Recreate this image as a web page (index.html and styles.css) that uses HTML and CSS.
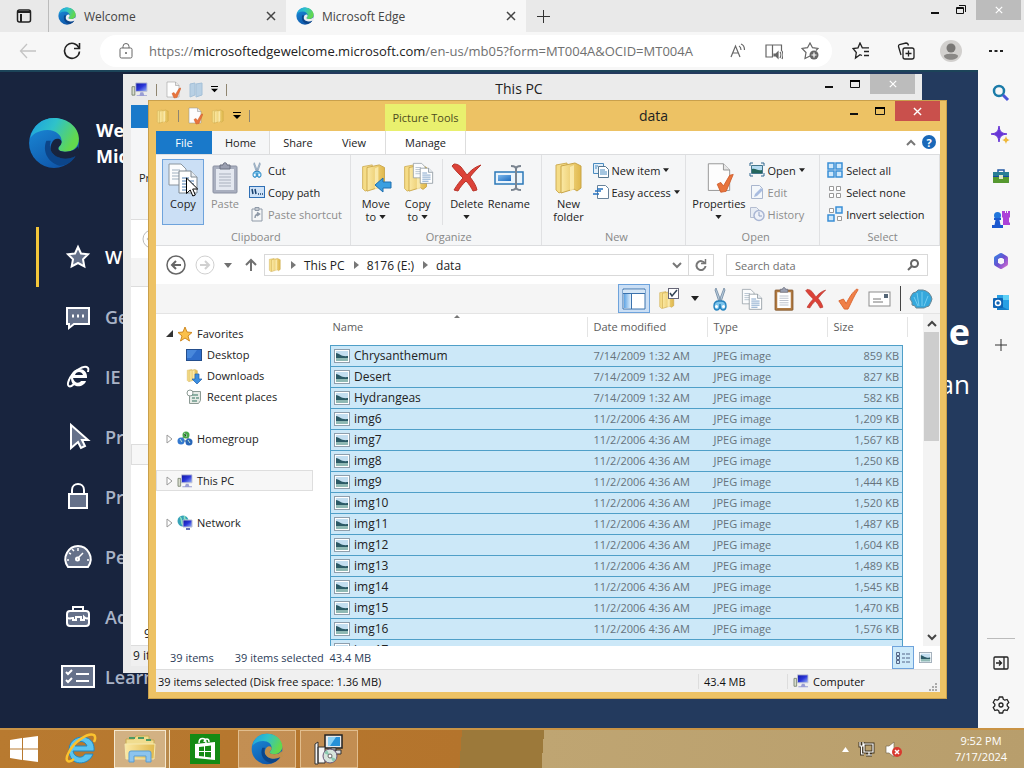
FILE: index.html
```html
<!DOCTYPE html>
<html lang="en">
<head>
  <meta charset="UTF-8" />
  <meta name="viewport" content="width=device-width, initial-scale=1.0" />
  <title>Microsoft Edge</title>
  <link rel="stylesheet" href="styles.css">
</head>
<body>
  <!-- shared icons -->
  <svg class="sprite" width="0" height="0" aria-hidden="true">
    <defs>
      <linearGradient id="g-edge-top" x1="0" y1="0" x2="1" y2="0.4">
        <stop offset="0" stop-color="#1b9de2" /><stop offset="0.5" stop-color="#2fc2c9" /><stop offset="1" stop-color="#62d84e" />
      </linearGradient>
      <linearGradient id="g-edge-low" x1="0" y1="0" x2="0.6" y2="1">
        <stop offset="0" stop-color="#1b8fdc" /><stop offset="1" stop-color="#0f55a8" />
      </linearGradient>
      <linearGradient id="g-folder" x1="0" y1="0" x2="1" y2="0">
        <stop offset="0" stop-color="#fbe9a4" /><stop offset="1" stop-color="#e0b84c" />
      </linearGradient>
      <linearGradient id="g-blue" x1="0" y1="0" x2="1" y2="1">
        <stop offset="0" stop-color="#7db8ec" /><stop offset="1" stop-color="#1c6cc0" />
      </linearGradient>
      <linearGradient id="g-pane" x1="0" y1="0" x2="1" y2="0">
        <stop offset="0" stop-color="#5fa4e4" /><stop offset="1" stop-color="#e4f1fc" />
      </linearGradient>
      <linearGradient id="g-screen" x1="0" y1="0" x2="1" y2="1">
        <stop offset="0" stop-color="#1018a0" /><stop offset="0.5" stop-color="#2a35d8" /><stop offset="1" stop-color="#9cb8f8" />
      </linearGradient>
      <linearGradient id="g-purple" x1="0" y1="0" x2="1" y2="1">
        <stop offset="0" stop-color="#3f7be0" /><stop offset="0.5" stop-color="#6a4fd0" /><stop offset="1" stop-color="#c86ad0" />
      </linearGradient>
    </defs>
    <symbol id="edge" viewBox="0 0 48 48">
      <circle cx="24" cy="24" r="23" fill="url(#g-edge-low)" />
      <path d="M2 20C4 8 13 1 24 1c13 0 23 9 23 19 0 8-6 12-12 12-4 0-7-1-7-3 0-1 3-3 3-7 0-5-5-10-13-10C9 12 3 17 2 20z" fill="url(#g-edge-top)" />
      <path d="M17 22c-4 9 1 20 12 23 7 0 12-4 15-9-9 5-20 2-23-5-1-3-1-6 0-9z" fill="#0c4589" />
      <path d="M28 29c0 2 3 3 7 3 5 0 9-2 11-5l2 9-4 0c-9 5-20 2-23-5-1-5 2-11 6-11 3 0 4 2 4 3 0 3-3 4-3 6z" class="edge-hole" />
    </symbol>
    <symbol id="folder" viewBox="0 0 32 32">
      <path d="M3 3l11-2v26l-8 4-3-3z" fill="#f5dc86" stroke="#cfae57" />
      <path d="M8 4l14-3 6 3v22l-4 3-3-2-13 4z" fill="url(#g-folder)" stroke="#c9a548" />
      <path d="M17 5l4-2v24l-4 3z" fill="#fff3c0" opacity="0.7" />
    </symbol>
    <symbol id="pc" viewBox="0 0 18 16">
      <path d="M1 5h3v9H1z" fill="#d7dccd" stroke="#7c8672" />
      <path d="M5 1h12v9H5z" fill="url(#g-screen)" stroke="#c0c4d4" />
      <path d="M10 11h3l1 3h3v1H6v-1h3z" fill="#9a9ed4" />
    </symbol>
    <symbol id="checkdoc" viewBox="0 0 32 36">
      <path d="M4 2h17l7 7v23H4z" fill="#fdfdfd" stroke="#8d8d8d" />
      <path d="M21 2v7h7" fill="#e6e6e6" stroke="#8d8d8d" />
      <path d="M14 25l4-2 3 4 7-12 4-1-8 19-6 1z" fill="#e8743c" stroke="#cf5c2c" />
    </symbol>
    <symbol id="docs" viewBox="0 0 32 32">
      <path d="M2 2h12l5 5v16H2z" fill="#fbfcfd" stroke="#8b959e" />
      <path d="M5 8h8M5 11h9M5 14h9M5 17h9" stroke="#9fb0c0" />
      <path d="M12 9h12l6 6v16H12z" fill="#fff" stroke="#7c8790" />
      <path d="M24 9v6h6" fill="#e8edf2" stroke="#7c8790" />
      <path d="M15 16h7M15 19h12M15 22h12M15 25h12M15 28h9" stroke="#4d7fb5" />
    </symbol>
    <symbol id="board" viewBox="0 0 32 32">
      <rect x="4" y="4" width="24" height="27" rx="1" class="board-back" />
      <rect x="7" y="7" width="18" height="21" class="board-page" />
      <path d="M11 3h3c0-3 4-3 4 0h3v4H11z" fill="#9a9fb0" stroke="#6b7080" />
      <path d="M10 12h12M10 15h12M10 18h12M10 21h12M10 24h12" stroke="#a9b0bd" />
    </symbol>
    <symbol id="scissors" viewBox="0 0 16 24">
      <path d="M4 1l5 13-2 1L3 3zM12 1L7 14l2 1 4-12z" fill="#b9cbdc" stroke="#6c87a0" stroke-width="0.8" />
      <path d="M7 14c-3 0-5 2-5 5s1 4 3 4c3 0 3-4 3-6 0 2 0 6 3 6 2 0 3-1 3-4s-2-5-5-5z" fill="#7cc4ec" stroke="#2481bd" stroke-width="1.4" />
      <circle cx="4.500" cy="19.500" r="1.500" fill="#fff" /><circle cx="11.500" cy="19.500" r="1.500" fill="#fff" />
    </symbol>
    <symbol id="cross" viewBox="0 0 32 32">
      <path d="M3 2c3 0 5 1 7 3l6 8c4-5 8-8 14-10-4 4-8 8-11 12 3 4 6 8 7 13l-4 1c-2-4-4-7-7-10-3 3-6 6-8 10L3 28c3-5 6-9 9-12C8 12 4 8 1 4z" fill="#dc4238" stroke="#b9362c" />
    </symbol>
    <symbol id="tick" viewBox="0 0 24 24">
      <path d="M2 14l5-2 3 5C13 11 17 4 22 1l1 1c-4 6-7 13-11 21H8z" fill="#f08048" stroke="#d9642e" />
    </symbol>
    <symbol id="picture" viewBox="0 0 16 14">
      <rect x="0.500" y="0.500" width="15" height="13" fill="#fff" stroke="#8e9eac" />
      <path d="M2 2h12v10H2z" fill="#c3def0" />
      <path d="M2 4c3 0 5 4 12 3v2H2z" fill="#2b5a66" />
      <path d="M2 9h12v3H2z" fill="#8fb9b4" />
    </symbol>
    <symbol id="caret" viewBox="0 0 8 5"><path d="M0 0h8L4 5z" fill="currentColor" /></symbol>
    <symbol id="chev" viewBox="0 0 10 8"><path d="M1 2l4 4 4-4" fill="none" stroke="currentColor" stroke-width="2" /></symbol>
    <symbol id="close" viewBox="0 0 10 10"><path d="M1 1l8 8M9 1L1 9" stroke="currentColor" stroke-width="1.500" /></symbol>
    <symbol id="tri" viewBox="0 0 7 10"><path d="M1 1l5 4-5 4z" fill="#fff" stroke="#9a9a9a" /></symbol>
    <symbol id="up-arrow" viewBox="0 0 14 14"><path d="M7 13V2M2 7l5-5 5 5" fill="none" stroke="currentColor" stroke-width="2" /></symbol>
  </svg>

  <div class="browser">
    <header class="tabs">
      <button class="tab-menu" aria-label="Tab actions">
        <svg width="16" height="16" viewBox="0 0 16 16" fill="none" stroke="#222" stroke-width="1.500"><rect x="1.500" y="2" width="13" height="12" rx="2" /><path d="M5 6v8M1.500 4h13" stroke-width="2" /></svg>
      </button>
      <div class="tab">
        <svg class="edge-light" width="18" height="18"><use href="#edge" /></svg>
        <span>Welcome</span>
        <button aria-label="Close tab"><svg width="10" height="10"><use href="#close" /></svg></button>
      </div>
      <div class="tab active">
        <svg class="edge-light" width="18" height="18"><use href="#edge" /></svg>
        <span>Microsoft Edge</span>
        <button aria-label="Close tab"><svg width="10" height="10"><use href="#close" /></svg></button>
      </div>
      <button class="new-tab" aria-label="New tab"><svg width="15" height="15" viewBox="0 0 15 15" stroke="#333"><path d="M7.500 1v13M1 7.500h13" /></svg></button>
      <div class="win-buttons main-buttons">
        <button aria-label="Minimize"><svg width="12" height="12" viewBox="0 0 12 12"><path d="M2 8h8v2H2z" fill="#111" /></svg></button>
        <button aria-label="Restore"><svg width="12" height="12" viewBox="0 0 12 12" fill="none" stroke="#111"><path d="M1.500 3.500h7v6h-7zM1 4.500h8" /><path d="M4 1.500h6.500V8" /></svg></button>
        <button class="close" aria-label="Close"><svg width="8" height="8"><use href="#close" /></svg></button>
      </div>
    </header>

    <div class="toolbar">
      <button class="faded" aria-label="Back"><svg width="18" height="16" viewBox="0 0 18 16" fill="none" stroke="#c4c4c4" stroke-width="1.300"><path d="M17 8H2M8 1L1.500 8 8 15" /></svg></button>
      <button aria-label="Refresh"><svg width="18" height="18" viewBox="0 0 18 18" fill="none" stroke="#222" stroke-width="1.600"><path d="M16 6A7.500 7.500 0 1 0 16.500 9.500" /><path d="M16.500 1v5.500H11" /></svg></button>
      <div class="address">
        <svg width="14" height="16" viewBox="0 0 14 16" fill="none" stroke="#666"><rect x="1" y="5" width="12" height="10" rx="1.500" /><path d="M4 5V3.500a3 3 0 0 1 6 0V5" /><circle cx="7" cy="10" r="0.600" fill="#666" /></svg>
        <a class="url" href="#">https://<b>microsoftedgewelcome.microsoft.com</b>/en-us/mb05?form=MT004A&amp;OCID=MT004A</a>
        <button aria-label="Read aloud"><svg width="18" height="18" viewBox="0 0 18 18" fill="none" stroke="#666" stroke-width="1.200"><path d="M2 15L6.500 4 11 15M3.500 11h6M10 4c2 1 2 3 2 4M12 2c3 1 3.500 4 3.500 6" /></svg></button>
        <button aria-label="Immersive reader"><svg width="18" height="18" viewBox="0 0 18 18" fill="none" stroke="#666" stroke-width="1.200"><path d="M8 15H1V3h6.500v12M8 3h8.500v6" /><path d="M9 12h2l2-2v6l-2-2H9z" fill="#666" /><path d="M15 10c1 1 1 4 0 6M17 9c1 2 1 6 0 8" /></svg></button>
        <button aria-label="Add to favorites"><svg width="18" height="18" viewBox="0 0 18 18" fill="none" stroke="#666" stroke-width="1.200"><path d="M9 14l-5 2.500 1-6L1 6.500l5.500-.8L9 1l2.500 4.700 5.500.8-2 2" /><circle cx="13" cy="13" r="4.500" fill="#666" stroke="none" /><path d="M13 10.500v5M10.500 13h5" stroke="#fff" /></svg></button>
      </div>
      <div class="tools">
        <button aria-label="Favorites"><svg width="18" height="18" viewBox="0 0 18 18" fill="none" stroke="#222" stroke-width="1.300"><path d="M10 13.500L8 12.700 3.500 16l.8-5.500L1 6.500l5-.7L8 1l2.300 4.800H17M12 9.500h5M12 13.500h5" /></svg></button>
        <button aria-label="Collections"><svg width="18" height="18" viewBox="0 0 18 18" fill="none" stroke="#222" stroke-width="1.300"><rect x="6" y="6" width="11" height="11" rx="2" /><path d="M11.500 8.500v6M8.500 11.500h6M4 13L1.500 4.500Q1.300 3 2.500 2.500L9 1q2 0 2.500 2.500" /></svg></button>
        <button aria-label="Profile"><svg width="22" height="22" viewBox="0 0 22 22"><circle cx="11" cy="11" r="11" fill="#d2d0ce" /><circle cx="11" cy="8" r="4.500" fill="#797775" /><path d="M4 16c0-3 14-3 14 0-1 5-13 5-14 0z" fill="#8a8886" /></svg></button>
        <button aria-label="More"><svg width="16" height="6" viewBox="0 0 16 6"><path d="M1 2h3v2H1zM6.500 2h3v2h-3zM12 2h3v2h-3z" fill="#222" /></svg></button>
      </div>
    </div>

    <div class="content">
      <main class="page">
        <aside class="menu">
          <div class="brand">
            <svg class="edge-dark" width="52" height="52"><use href="#edge" /></svg>
            <h1>We<br>Mic</h1>
          </div>
          <nav>
            <a class="current" href="#"><svg width="24" height="24" viewBox="0 0 24 24"><path d="M12 2l3 6.500 7 .8-5 5 1.300 7L12 18l-6.300 3.300 1.300-7-5-5 7-.8z" /></svg>W</a>
            <a href="#"><svg width="24" height="24" viewBox="0 0 24 24"><path d="M1 3h22v16H8l-5 4v-4H1z" /><path d="M6 11h2M11 11h2M16 11h2" stroke-width="3" /></svg>Ge</a>
            <a href="#"><svg width="24" height="24" viewBox="0 0 24 24"><path d="M7 13h14c1-12-16-12-16 0 0 11 13 10 15 3h-5c-2 3-7 2-8-3zM9 10c1-4 7-4 8 0z" fill="#fff" stroke="none" fill-rule="evenodd" /><path d="M8 19c-4 4-8 3-5-4C6 7 18-1 22 3c1 1 0 3 0 4" fill="none" /></svg>IE</a>
            <a href="#"><svg width="24" height="26" viewBox="0 0 24 26"><path d="M5 1l17 15h-6l3 6-4 2-3-6-7 6z" /></svg>Pr</a>
            <a href="#"><svg width="24" height="28" viewBox="0 0 24 28"><path d="M3 11h18v14H3z" /><path d="M6 11V7c0-8 12-8 12 0v4" fill="none" /></svg>Pr</a>
            <a href="#"><svg width="24" height="24" viewBox="2 0 24 24"><path d="M4 22C-3 12 5 1 14 1s17 11 10 21z" /><path d="M13 14l6-6M14 3v3M5 8l2 1M3 15h2M23 15h2M8 4l2 2" stroke-width="1.500" /><circle cx="13.500" cy="14" r="1.500" /></svg>Pe</a>
            <a href="#"><svg width="24" height="24" viewBox="0 0 24 24"><rect x="1" y="6" width="22" height="15" rx="3" /><path d="M7 6V2h10v4M1 13c3 1 6 0 6-1v3h3v-3h5v3h3v-3c1 1 3 2 5 1" fill="none" /></svg>Ad</a>
            <a class="wide" href="#"><svg width="34" height="24" viewBox="0 0 34 24"><rect x="1" y="1" width="32" height="21" /><path d="M5 7l2 2 4-4M5 15l2 2 4-4M15 9h13M15 16h13" /></svg>Learn</a>
          </nav>
        </aside>
        <section class="hero">
          <h2>e</h2>
          <p>an</p>
        </section>
      </main>

      <aside class="side">
        <button aria-label="Search"><svg width="18" height="18" viewBox="0 0 18 18" fill="none"><circle cx="7" cy="7" r="5" stroke="#1b7ba8" stroke-width="2.500" /><path d="M11 11l5 5" stroke="#4a54d8" stroke-width="3" /></svg></button>
        <button aria-label="Discover"><svg width="20" height="20" viewBox="0 0 20 20"><path d="M8 1c1 6 2 7 8 8-6 1-7 2-8 8-1-6-2-7-8-8 6-1 7-2 8-8z" fill="#6836d6" stroke="#6836d6" /><path d="M15 11c1 3 1 3 4 4-3 1-3 1-4 4-1-3-1-3-4-4 3-1 3-1 4-4z" fill="#eeb83a" /></svg></button>
        <button aria-label="Shopping"><svg width="18" height="16" viewBox="0 0 18 16"><path d="M6 3V1h6v2" fill="none" stroke="#235aa5" stroke-width="1.500" /><rect x="1" y="3" width="16" height="11" rx="1" fill="#174ba0" /><path d="M1 8h16v5q0 1-1 1H2q-1 0-1-1z" fill="#56992f" /><path d="M1 3h16v4H1z" fill="#287e94" /><path d="M7 6h4v4H7z" fill="#e0e7c8" /></svg></button>
        <button aria-label="Games"><svg width="18" height="20" viewBox="0 0 18 20"><path d="M11 2h2v2h1V2h1v2h1V2h2v6l-1 1v4l1 1v2h-7V9l-1-1V2z" fill="#ac42d8" /><circle cx="5.500" cy="6.500" r="3.500" fill="#2176dc" /><path d="M2 9h7v2H7.500l1 5H11v3H0v-3h2.500l1-5H2z" fill="#1b58cf" /></svg></button>
        <button aria-label="Microsoft 365"><svg width="18" height="18" viewBox="0 0 18 18" fill="none"><path d="M9 3l5 3v6l-5 3-5-3V6z" stroke="url(#g-purple)" stroke-width="4" stroke-linejoin="round" /></svg></button>
        <button aria-label="Outlook"><svg width="18" height="18" viewBox="0 0 18 18"><path d="M5 1h12v15H5z" fill="#28a0e4" /><path d="M11 1h6v5h-6z" fill="#5fd0f6" /><path d="M5 10l12 6H5z" fill="#147dc8" /><rect x="1" y="4" width="10" height="10" rx="1" fill="#0f64b4" /><circle cx="6" cy="9" r="2.500" fill="none" stroke="#fff" stroke-width="1.500" /></svg></button>
        <button aria-label="Customize"><svg width="14" height="14" viewBox="0 0 14 14" stroke="#333"><path d="M7 1v12M1 7h12" /></svg></button>
        <hr>
        <button aria-label="Hide sidebar"><svg width="16" height="14" viewBox="0 0 16 14" fill="none" stroke="#222" stroke-width="1.300"><rect x="1" y="1" width="14" height="12" rx="1" /><path d="M11 1v12M3 7h5M6 4.500L8.500 7 6 9.500" /></svg></button>
        <button aria-label="Settings"><svg width="18" height="18" viewBox="0 0 18 18" fill="none" stroke="#222" stroke-width="1.300"><path d="M7.300 1h3.400l.6 2.300 1.500.9 2.300-.7 1.700 3L15.200 8.100v1.800l1.600 1.600-1.700 3-2.300-.7-1.500.9-.6 2.300H7.300l-.6-2.300-1.500-.9-2.300.7-1.700-3 1.600-1.600V8.100L1.200 6.500l1.700-3 2.300.7 1.500-.9z" stroke-linejoin="round" /><circle cx="9" cy="9" r="2" /></svg></button>
      </aside>
    </div>
  </div>

  <!-- window behind -->
  <section class="window pc-window">
    <div class="titlebar">
      <div class="quick">
        <svg width="17" height="15"><use href="#pc" /></svg><i></i>
        <svg width="16" height="18"><use href="#checkdoc" /></svg>
        <svg class="pale" width="14" height="16" viewBox="0 0 14 16"><path d="M1 2l5-1v12l-5 2zM7 2l6-1v12l-6 2z" fill="#b8d0e4" stroke="#a4c0d8" /></svg>
        <svg width="7" height="7" viewBox="0 0 8 8"><path d="M0 0h8v1H0zM0 3h8L4 7z" /></svg><i></i>
      </div>
      <h2>This PC</h2>
      <div class="win-buttons">
        <button aria-label="Minimize"><svg width="12" height="12" viewBox="0 0 12 12"><path d="M2 8h8v2H2z" fill="#111" /></svg></button>
        <button aria-label="Maximize"><svg width="12" height="12" viewBox="0 0 12 12"><path d="M1.500 2.500h9v7h-9z" fill="none" stroke="#111" /><path d="M1 2h10v2H1z" /></svg></button>
        <button class="close" aria-label="Close"><svg width="8" height="8"><use href="#close" /></svg></button>
      </div>
    </div>
    <div class="window-body">
      <div class="back-tabs"><span></span></div>
      <div class="back-ribbon">Pr</div>
      <div class="back-nav"><svg width="20" height="20" viewBox="0 0 20 20" fill="none" stroke="#bbb"><circle cx="10" cy="10" r="9" /><path d="M14 10H6M9 7l-3 3 3 3" stroke-width="2" /></svg></div>
      <div class="back-bar"></div>
      <div class="back-main"><span class="back-row"></span><span class="back-count">9</span></div>
      <div class="back-status">9 it</div>
    </div>
  </section>

  <!-- active window -->
  <section class="window data-window">
    <div class="titlebar">
      <div class="quick">
        <svg width="14" height="15"><use href="#folder" /></svg><i></i>
        <svg width="16" height="18"><use href="#checkdoc" /></svg>
        <svg width="14" height="15"><use href="#folder" /></svg>
        <svg width="8" height="8" viewBox="0 0 8 8"><path d="M0 0h8v1H0zM0 3h8L4 7z" /></svg><i></i>
      </div>
      <span class="context">Picture Tools</span>
      <h2>data</h2>
      <div class="win-buttons">
        <button aria-label="Minimize"><svg width="12" height="12" viewBox="0 0 12 12"><path d="M2 8h8v2H2z" fill="#111" /></svg></button>
        <button aria-label="Maximize"><svg width="12" height="12" viewBox="0 0 12 12"><path d="M1.500 2.500h9v7h-9z" fill="none" stroke="#111" /><path d="M1 2h10v2H1z" /></svg></button>
        <button class="close red" aria-label="Close"><svg width="9" height="9"><use href="#close" /></svg></button>
      </div>
    </div>
    <div class="window-body">
      <nav class="ribbon-tabs">
        <button class="file">File</button>
        <button class="on">Home</button>
        <button>Share</button>
        <button>View</button>
        <button class="manage">Manage</button>
        <span class="spacer"></span>
        <button class="mini" aria-label="Collapse ribbon"><svg class="flip" width="10" height="8"><use href="#chev" /></svg></button>
        <button class="mini help" aria-label="Help">?</button>
      </nav>

      <div class="ribbon">
        <div class="group">
          <div class="tools-row">
            <button class="big picked"><svg width="32" height="32"><use href="#docs" /></svg>Copy</button>
            <button class="big dim"><svg class="board-gray" width="32" height="32"><use href="#board" /></svg>Paste</button>
            <div class="stack">
              <button><svg width="16" height="16"><use href="#scissors" /></svg>Cut</button>
              <button><svg width="16" height="12" viewBox="0 0 16 12"><rect x="0.500" y="0.500" width="15" height="11" fill="#cfe2f7" stroke="#2f6fb5" /><path d="M3 3l1 5M6 3l1 5M9 8h1M11 8h1M13 8h1" stroke="#18406e" stroke-width="1.500" /></svg>Copy path</button>
              <button class="dim"><svg width="16" height="15" viewBox="0 0 16 15" fill="none" stroke="#8f9aa8"><path d="M3 2h10v12H3zM6 0.500h4v3H6z" /><path d="M6 11c0-3 1-4 4-4M8 5.500L10.500 7 8 9" stroke-width="1.500" /></svg>Paste shortcut</button>
            </div>
          </div>
          <span class="group-name">Clipboard</span>
        </div>
        <div class="group">
          <div class="tools-row organize">
            <button class="big"><svg width="32" height="32" viewBox="0 0 32 32"><use href="#folder" width="28" height="32" /><path d="M31 20v6h-8v4l-8-7 8-7v4z" fill="#3a9fe0" stroke="#1f6fb0" /></svg>Move<span>to <svg width="7" height="4"><use href="#caret" /></svg></span></button>
            <button class="big"><svg width="32" height="32" viewBox="0 0 32 32"><use href="#folder" width="28" height="32" /><use href="#docs" x="10" width="22" height="22" /></svg>Copy<span>to <svg width="7" height="4"><use href="#caret" /></svg></span></button>
            <i class="line"></i>
            <button class="big"><svg width="32" height="32"><use href="#cross" /></svg>Delete<span><svg width="7" height="4"><use href="#caret" /></svg></span></button>
            <button class="big"><svg width="32" height="32" viewBox="0 0 32 32"><rect x="2" y="10" width="28" height="12" fill="#eaf4fc" stroke="#2b78b8" stroke-width="1.500" /><path d="M5 13h13v6H5z" fill="url(#g-blue)" /><path d="M18 4c3 0 5 1 5 3v18c0 2-2 3-5 3M28 4c-3 0-5 1-5 3v18c0 2 2 3 5 3" fill="none" stroke="#7a8490" stroke-width="2" /></svg>Rename</button>
          </div>
          <span class="group-name">Organize</span>
        </div>
        <div class="group">
          <div class="tools-row">
            <button class="big"><svg width="32" height="32"><use href="#folder" /></svg>New<span>folder</span></button>
            <div class="stack">
              <button><svg width="16" height="16" viewBox="0 0 16 16"><path d="M0.500 1.500h10v10h-10z" fill="#e4f0fa" stroke="#4b8cc0" /><path d="M5.500 4.500h7l3 3v8h-10z" fill="#fff" stroke="#55768f" /><path d="M7 8h5M7 10h7M7 12h7M2 4h3M2 6h2" stroke="#4b8cc0" /></svg>New item <svg width="6" height="4"><use href="#caret" /></svg></button>
              <button><svg width="16" height="16" viewBox="0 0 16 16"><path d="M4.500 1.500h8l3 3v10h-11z" fill="#fff" stroke="#68829a" /><path d="M0 10h6M2 7h6M4 5h6" stroke="#2471c0" stroke-width="1.500" /></svg>Easy access <svg width="6" height="4"><use href="#caret" /></svg></button>
            </div>
          </div>
          <span class="group-name">New</span>
        </div>
        <div class="group">
          <div class="tools-row">
            <button class="big"><svg width="32" height="32"><use href="#checkdoc" /></svg>Properties<span><svg width="7" height="4"><use href="#caret" /></svg></span></button>
            <div class="stack">
              <button><svg width="16" height="16" viewBox="0 0 16 16"><path d="M2.500 3.500h11v8h-11z" fill="#b5dcf2" stroke="#44768c" /><path d="M3 7c4-1 5 2 10 1v3H3z" fill="#24665c" /><path d="M1 4V1h3M12 1h3v3M1 11v3h3M15 11v3h-3" fill="none" stroke="#2d6690" /></svg>Open <svg width="6" height="4"><use href="#caret" /></svg></button>
              <button class="dim"><svg width="16" height="16" viewBox="0 0 16 16"><path d="M2.500 1.500h8l3 3v10h-11z" fill="#f3f7fb" stroke="#a9b6ce" /><path d="M5 13l1-3 6-6 2 2-6 6z" fill="#a8bce0" /></svg>Edit</button>
              <button class="dim"><svg width="16" height="16" viewBox="0 0 16 16"><path d="M1.500 1.500h6l3 3v7h-9z" fill="#e7ecf4" stroke="#b4bdd0" /><circle cx="10" cy="9.500" r="5" fill="#eef1f8" stroke="#a9b6d4" stroke-width="1.500" /><path d="M10 6v4h3" fill="none" stroke="#8fa0c4" /></svg>History</button>
            </div>
          </div>
          <span class="group-name">Open</span>
        </div>
        <div class="group">
          <div class="tools-row select">
            <div class="stack">
              <button><svg width="16" height="16" viewBox="0 0 16 16" fill="#cfe8fb" stroke="#3a8fd6" stroke-width="1.500"><path d="M1 1h6v6H1zM9 1h6v6H9zM1 9h6v6H1zM9 9h6v6H9z" /></svg>Select all</button>
              <button><svg width="16" height="16" viewBox="0 0 16 16" fill="#fff" stroke="#999"><path d="M2.500 2.500h4v4h-4zM9.500 2.500h4v4h-4zM2.500 9.500h4v4h-4zM9.500 9.500h4v4h-4z" /></svg>Select none</button>
              <button><svg width="16" height="16" viewBox="0 0 16 16" fill="#cfe8fb" stroke="#3a8fd6" stroke-width="1.500"><path d="M9 1h6v6H9zM1 9h6v6H1z" /><path d="M2.500 2.500h4v4h-4zM10.500 10.500h4v4h-4z" fill="#fff" stroke="#999" stroke-width="1" /></svg>Invert selection</button>
            </div>
          </div>
          <span class="group-name">Select</span>
        </div>
      </div>

      <div class="nav-row">
        <button aria-label="Back"><svg width="20" height="20" viewBox="0 0 20 20" fill="none" stroke="#666"><circle cx="10" cy="10" r="9" stroke-width="1.500" /><path d="M15 10H6M10 6l-4 4 4 4" stroke-width="2" /></svg></button>
        <button aria-label="Forward"><svg width="20" height="20" viewBox="0 0 20 20" fill="none" stroke="#d0d0d0"><circle cx="10" cy="10" r="9" /><path d="M5 10h9M10 6l4 4-4 4" stroke-width="2" /></svg></button>
        <button class="gray" aria-label="Recent"><svg width="8" height="5"><use href="#caret" /></svg></button>
        <button class="gray up" aria-label="Up"><svg width="14" height="14"><use href="#up-arrow" /></svg></button>
        <div class="path">
          <svg width="14" height="16"><use href="#folder" /></svg>
          <svg class="sep" width="5" height="8" viewBox="0 0 5 8"><path d="M0 0l5 4-5 4z" fill="#777" /></svg><a href="#">This PC</a>
          <svg class="sep" width="5" height="8" viewBox="0 0 5 8"><path d="M0 0l5 4-5 4z" fill="#777" /></svg><a href="#">8176 (E:)</a>
          <svg class="sep" width="5" height="8" viewBox="0 0 5 8"><path d="M0 0l5 4-5 4z" fill="#777" /></svg><a href="#">data</a>
          <button class="drop" aria-label="Previous locations"><svg width="10" height="8"><use href="#chev" /></svg></button>
          <button class="reload" aria-label="Refresh"><svg width="12" height="12" viewBox="0 0 12 12" fill="none" stroke="#777" stroke-width="2"><path d="M10 4.500A4.500 4.500 0 1 0 10.500 7" /><path d="M10.500 0v4.500H6" stroke-width="1.500" /></svg></button>
        </div>
        <label class="search">
          <input type="text" placeholder="Search data" aria-label="Search data">
          <svg width="12" height="12" viewBox="0 0 12 12" fill="none" stroke="#666" stroke-width="2"><circle cx="7.500" cy="4.500" r="3.500" /><path d="M5 7l-4 4" /></svg>
        </label>
      </div>

      <div class="classic">
        <button class="picked pane" aria-label="Navigation pane"><svg width="24" height="22" viewBox="0 0 24 22"><path d="M1 1h22v20H1z" fill="#fff" stroke="#3b72ad" /><path d="M1 2h22v3H1z" fill="#d5e6f6" /><path d="M2 6h7v14H2z" fill="url(#g-pane)" /><path d="M1 5.500h22M9.500 5v16" stroke="#3b72ad" /></svg></button>
        <button aria-label="Folder options"><svg width="24" height="24" viewBox="0 0 24 24"><use href="#folder" y="3" width="18" height="20" /><rect x="10.500" y="1.500" width="10" height="10" fill="#fff" stroke="#667" /><path d="M12 6l2 3 5-6" fill="none" stroke="#345" stroke-width="1.500" /></svg></button>
        <button class="thin" aria-label="More options"><svg width="8" height="5"><use href="#caret" /></svg></button>
        <button aria-label="Cut"><svg width="20" height="24"><use href="#scissors" /></svg></button>
        <button aria-label="Copy"><svg width="22" height="24"><use href="#docs" /></svg></button>
        <button aria-label="Paste"><svg class="board-brown" width="24" height="26"><use href="#board" /></svg></button>
        <button aria-label="Delete"><svg width="22" height="22"><use href="#cross" /></svg></button>
        <button aria-label="Properties"><svg width="22" height="22"><use href="#tick" /></svg></button>
        <button aria-label="Email"><svg width="24" height="16" viewBox="0 0 24 16"><rect x="1" y="1" width="21" height="14" fill="#fff" stroke="#8d8d8d" /><path d="M16 3h4v4h-4z" fill="#567" /><path d="M5 8h8M5 11h10" stroke="#777" /></svg></button>
        <i></i>
        <button aria-label="Settings"><svg width="24" height="22" viewBox="0 0 24 22"><path d="M7 20l-1-2-3-1 0-3-2-3 1-3 2-3 3-1 2-2h5l3 1 3 2 2 3 1 3-1 3-2 4-3 1-2 1z" fill="#35a8dc" stroke="#6c8794" /><path d="M9 18L5 9M10 18L8 5M13 18V4M15 18l4-10" stroke="#74cdf0" /></svg></button>
      </div>

      <div class="explorer">
        <nav class="tree">
          <a href="#"><svg class="arrow" width="7" height="7" viewBox="0 0 7 7"><path d="M7 0v7H0z" fill="#333" /></svg><svg width="16" height="16" viewBox="0 0 16 16"><path d="M8 1l2 5 5 .5-4 3.500 1.500 5L8 12l-4.500 3L5 10 1 6.500 6 6z" fill="#fbc04a" stroke="#d08a22" /></svg>Favorites</a>
          <a class="sub" href="#"><svg width="16" height="12" viewBox="0 0 16 12"><rect x="0.500" y="0.500" width="15" height="11" fill="#2f6ecb" stroke="#244e8c" /><path d="M1 1h10L5 9H1z" fill="#5a9ae6" opacity="0.600" /></svg>Desktop</a>
          <a class="sub" href="#"><svg width="16" height="16" viewBox="0 0 16 16"><use href="#folder" width="13" height="15" /><path d="M9 6h4v5h3l-5 5-5-5h3z" fill="#3b8ee0" stroke="#1f62ac" stroke-width="0.700" /></svg>Downloads</a>
          <a class="sub" href="#"><svg width="16" height="16" viewBox="0 0 16 16"><path d="M3.500 2.500h11v9l-2 3h-9z" fill="#e6ebe6" stroke="#8c9a94" /><circle cx="4" cy="4" r="3" fill="#fff" stroke="#8c9a94" /><path d="M6 6h6M6 9h3M10 9h3M6 12h5" stroke="#6d9b8c" stroke-width="1.500" /></svg>Recent places</a>
          <a class="top" href="#"><svg class="arrow" width="7" height="10"><use href="#tri" /></svg><svg width="16" height="16" viewBox="0 0 16 16"><path d="M4 9l5-5 4 7z" fill="none" stroke="#96a8b8" stroke-width="2" /><circle cx="9" cy="4" r="3.500" fill="#48a848" /><circle cx="4" cy="10" r="3.500" fill="#3479d0" /><circle cx="12" cy="11" r="3.500" fill="#2866b8" /><path d="M7 2c2 1 3 2 2 4M3 8l2 3M11 9l2 3" stroke="#b8e0d0" /></svg>Homegroup</a>
          <a class="top here" href="#"><svg class="arrow" width="7" height="10"><use href="#tri" /></svg><svg width="16" height="14"><use href="#pc" /></svg>This PC</a>
          <a class="top" href="#"><svg class="arrow" width="7" height="10"><use href="#tri" /></svg><svg width="16" height="16" viewBox="0 0 16 16"><circle cx="6" cy="6" r="5.500" fill="#36a3b8" /><path d="M3 2c3 2 0 5 3 8M8 1c-2 3 2 5 3 4" fill="none" stroke="#8de0c0" stroke-width="1.500" /><path d="M6 5h9v7H6z" fill="url(#g-screen)" stroke="#b7bdd2" /><path d="M9 13h4v2H9z" fill="#6670b8" /></svg>Network</a>
        </nav>
        <div class="files">
          <table>
            <thead>
              <tr><th class="name">Name<svg width="6" height="3" viewBox="0 0 6 3"><path d="M0 3h6L3 0z" fill="#777" /></svg></th><th class="date">Date modified</th><th class="type">Type</th><th class="size">Size</th></tr>
            </thead>
            <tbody id="rows"></tbody>
          </table>
        </div>
        <div class="scrollbar">
          <svg class="flip" width="10" height="8"><use href="#chev" /></svg>
          <span></span>
          <svg width="10" height="8"><use href="#chev" /></svg>
        </div>
      </div>

      <div class="summary">
        <span>39 items</span><span>39 items selected&nbsp; 43.4 MB</span>
        <button class="picked" aria-label="Details view"><svg width="14" height="12" viewBox="0 0 14 12" fill="none" stroke="#568"><path d="M0.500 0.500h3v3h-3zM0.500 4.500h3v3h-3zM0.500 8.500h3v3h-3zM6 2h3M10 2h4M6 6h3M10 6h4M6 10h3M10 10h4" /></svg></button>
        <button aria-label="Large icons view"><svg width="13" height="11"><use href="#picture" /></svg></button>
      </div>
      <footer class="status">
        <span class="free">39 items selected (Disk free space: 1.36 MB)</span>
        <span class="total">43.4 MB</span>
        <span class="zone"><svg width="16" height="14"><use href="#pc" /></svg>Computer</span>
        <svg class="grip" width="9" height="9" viewBox="0 0 9 9" fill="#aaa"><path d="M6 0h2v2H6zM3 3h2v2H3zM6 3h2v2H6zM0 6h2v2H0zM3 6h2v2H3zM6 6h2v2H6z" /></svg>
      </footer>
    </div>
  </section>

  <svg class="pointer" width="12" height="20" viewBox="0 0 12 20"><path d="M0.500 1v15.500l3.700-3.500 2.600 6 2.500-1-2.600-6h5z" fill="#fff" stroke="#000" /></svg>

  <footer class="taskbar">
    <button class="start" aria-label="Start"><svg width="28" height="26" viewBox="0 0 28 26" fill="#fff"><path d="M0 4l12-2v10.500H0zM13 2l15-2v12.500H13zM0 13.500h12V24L0 22zM13 13.500h15V26l-15-2z" /></svg></button>
    <button class="ie" aria-label="Internet Explorer"><svg width="32" height="32" viewBox="0 0 32 32"><path d="M8 18h21C31-1 4 0 4 17c0 17 20 16 24 4h-8c-2 5-11 4-12-3zM10 13c2-6 10-6 12 0z" fill="#5cc4f0" stroke="#2088c4" fill-rule="evenodd" /><path d="M9 26C3 31-1 28 4 19 9 9 23-1 29 2c2 2 1 5 0 7" fill="none" stroke="#fbc22e" stroke-width="2.500" /></svg></button>
    <button class="open stacked" aria-label="File Explorer"><svg width="32" height="30" viewBox="0 0 32 30"><path d="M2 5h8l2-3h13v4h5v18H2z" fill="#f0dc8e" stroke="#c6a850" /><path d="M5 4h6M14 4h6M22 6h5" stroke="#4b9a62" stroke-width="2" /><path d="M1 10h30l-1 15H2z" fill="url(#g-folder)" stroke="#f6eab0" /><path d="M5 28v-9q0-2 2-2h18q2 0 2 2v9h-5v-6H10v6z" fill="#8cc4ee" stroke="#5a9dd0" /></svg></button>
    <button class="store" aria-label="Store"><svg width="30" height="30" viewBox="0 0 30 30"><path d="M0 0h30v30H0z" fill="#148a14" /><path d="M5 10l20-2v18L5 24z" fill="#fff" /><path d="M9 9c0-6 7-6 7 0M14 8c1-4 5-4 5 0" fill="none" stroke="#fff" stroke-width="1.500" /><path d="M9 13l5-.6V17H9zM15 12.300l6-.8V17h-6zM9 18h5v4.500L9 22zM15 18h6v5.500l-6-.8z" fill="#148a14" /></svg></button>
    <button class="open" aria-label="Microsoft Edge"><svg class="edge-task" width="32" height="32"><use href="#edge" /></svg></button>
    <button class="open" aria-label="Setup"><svg width="32" height="32" viewBox="0 0 32 32"><path d="M12 2h17v13H12z" fill="#e8e8e8" stroke="#222" stroke-width="1.500" /><path d="M15 4h12v9H15z" fill="#2791d8" /><path d="M15 4h8l-6 9h-2z" fill="#8bd0f4" /><path d="M18 15h5v3h-5zM14 17h14v4H14z" fill="#ddd" stroke="#333" /><path d="M2 11l3-2v22H2zM5 14h7v16H5z" fill="#f4f4f4" stroke="#333" /><circle cx="17" cy="23" r="7" fill="#d6e4dc" stroke="#657" /><path d="M17 23l-6-3 3-3zM17 23l6 3-3 3z" fill="#8bc8b0" /><circle cx="17" cy="23" r="2" fill="#fff" stroke="#666" /></svg></button>
    <div class="tray">
      <svg width="7" height="5" viewBox="0 0 7 5"><path d="M0 5h7L3.500 0z" fill="#fff" /></svg>
      <svg width="18" height="16" viewBox="0 0 18 16" fill="none" stroke="#3d3220" stroke-width="3"><path d="M6 3h9v8H6zM8 14h6M11 11v3M2 1v4h3V1M3.500 5v8H6" /><path d="M6 3h9v8H6zM8 14h6M11 11v3M2 1v4h3V1M3.500 5v8H6" stroke="#fff" stroke-width="1.200" /></svg>
      <svg width="18" height="17" viewBox="0 0 18 17"><path d="M1 5h3l5-4v15l-5-4H1z" fill="#fff" stroke="#7a6a50" stroke-width="0.700" /><circle cx="12" cy="11" r="5" fill="#d8392f" /><path d="M10 9l4 4M14 9l-4 4" stroke="#fff" stroke-width="1.500" /></svg>
      <div class="clock">9:52 PM<br>7/17/2024</div>
    </div>
  </footer>

  <script src="script.js"></script>
</body>
</html>
```
FILE: styles.css
```css
* {
  box-sizing: border-box;
}
body {
  margin: 0;
  height: 100vh;
  display: flex;
  flex-direction: column;
  overflow: hidden;
  position: relative;
  font-family: "Open Sans", "Noto Sans", sans-serif;
  font-size: 12px;
  color: #222;
}
button {
  font: inherit;
  color: inherit;
  background: none;
  border: 0;
  padding: 0;
  display: flex;
  align-items: center;
  justify-content: center;
}
a {
  color: inherit;
  text-decoration: none;
}
h1, h2, p {
  margin: 0;
}
svg {
  flex: none;
}
.sprite {
  position: absolute;
}
.flip {
  transform: rotate(180deg);
}
.edge-light { --hole: #eee; }
.edge-dark { --hole: #18243e; }
.edge-task { --hole: #c08f4c; }
.edge-hole {
  fill: var(--hole);
}
.board-back {
  fill: var(--board);
  stroke: var(--board-line);
}
.board-page {
  fill: var(--sheet);
}
.board-gray { --board: #a9afbf; --board-line: #8b91a3; --sheet: #e4e8f0; }
.board-brown { --board: #b07a42; --board-line: #7e5127; --sheet: #fff; }

/* browser */
.browser {
  flex: 1;
  min-height: 0;
  display: flex;
  flex-direction: column;
}
.tabs {
  height: 32px;
  display: flex;
  background: #e9e9e9;
  color: #444;
}
.tab-menu {
  width: 48px;
}
.tab {
  width: 238px;
  display: flex;
  align-items: center;
  gap: 8px;
  padding: 0 10px 0 9px;
  border-left: 1px solid #bbb;
}
.tab span {
  flex: 1;
}
.tab.active {
  background: #f7f7f7;
  width: 240px;
  border-color: #f7f7f7;
}
.new-tab {
  width: 35px;
}
.win-buttons {
  display: flex;
  margin-left: auto;
  align-items: flex-start;
}
.win-buttons button {
  width: 26px;
  height: 20px;
}
.win-buttons .close {
  width: 45px;
  margin-left: 2px;
  background: #bcbcbc;
  color: #fff;
}
.win-buttons .red {
  background: #c9504c;
}
.main-buttons {
  padding-right: 3px;
}
.toolbar {
  height: 38px;
  display: flex;
  align-items: center;
  background: #f7f7f7;
  padding: 0 6px;
}
.toolbar > button {
  width: 44px;
}
.address {
  flex: 1;
  min-width: 0;
  height: 32px;
  margin-left: 6px;
  padding: 0 13px 0 19px;
  display: flex;
  align-items: center;
  gap: 18px;
  background: #fff;
  border-radius: 16px;
}
.url {
  flex: 1;
  min-width: 0;
  margin-left: -2px;
  white-space: nowrap;
  color: #707070;
  font-size: 13px;
}
.url b {
  font-weight: 400;
  color: #222;
}
.tools {
  display: flex;
  width: 186px;
  padding-left: 6px;
}
.tools button {
  flex: 1;
}
.content {
  flex: 1;
  min-height: 0;
  display: flex;
}
.page {
  flex: 1;
  display: flex;
  border-top: 2px solid #1c4459;
  background: #233a5e;
}
.menu {
  width: 320px;
  background: #18243e;
  color: #a9b3c6;
  font-size: 18px;
  font-weight: 600;
}
.brand {
  display: flex;
  align-items: center;
  gap: 16px;
  padding: 45px 0 0 28px;
  color: #fff;
}
.brand h1 {
  font-size: 18px;
  line-height: 26px;
}
.menu nav {
  padding: 58px 0 0 36px;
}
.menu nav a {
  display: flex;
  align-items: center;
  gap: 15px;
  height: 60px;
  padding-left: 27px;
  border-left: 3px solid transparent;
}
.menu nav .current {
  border-color: #f3c63a;
  color: #fff;
}
.menu nav svg {
  width: 24px;
  overflow: visible;
  fill: #65718a;
  stroke: #fff;
  stroke-width: 2;
}
.menu nav .wide {
  gap: 10px;
  padding-left: 22px;
}
.menu nav .wide svg {
  width: 34px;
}
.hero {
  flex: 1;
  padding: 236px 8px 0 0;
  text-align: right;
  color: #fff;
}
.hero h2 {
  font-size: 36px;
  line-height: 48px;
}
.hero p {
  padding-top: 8px;
  font-size: 26px;
  line-height: 40px;
}
.side {
  width: 46px;
  display: flex;
  flex-direction: column;
  padding: 2px 0;
  background: #f7f7f7;
}
.side button {
  height: 42px;
}
.side hr {
  width: 28px;
  margin: auto auto 3px;
  border: 0;
  border-top: 1px solid #bbb;
}

/* windows */
.window {
  position: absolute;
  display: flex;
  flex-direction: column;
  width: 799px;
  height: 599px;
  padding: 0 7px 7px 8px;
}
.pc-window {
  left: 123px;
  top: 74px;
  background: #ebebeb;
}
.data-window {
  left: 148px;
  top: 100px;
  background: #edc264;
  border: 1px solid #c9a04c;
  padding: 0 6px 6px 7px;
}
.titlebar {
  height: 31px;
  display: grid;
  grid-template-columns: 1fr auto 1fr;
}
.titlebar h2 {
  font-size: 14px;
  font-weight: 400;
  line-height: 30px;
  padding-right: 8px;
}
.quick {
  display: flex;
  align-items: center;
  gap: 8px;
}
.quick i {
  height: 12px;
  border-left: 1px solid #8f8570;
}
.data-window .titlebar {
  display: flex;
  height: 30px;
}
.data-window .quick {
  width: 229px;
}
.data-window h2 {
  flex: 1;
  padding: 0;
  text-align: center;
}
.context {
  align-self: flex-end;
  width: 81px;
  background: #e9f06e;
  line-height: 27px;
  font-size: 11px;
  text-align: center;
  color: #4e4c20;
  white-space: nowrap;
}
.window-body {
  flex: 1;
  min-height: 0;
  display: flex;
  flex-direction: column;
  background: #fff;
}
.back-tabs span {
  display: block;
  width: 56px;
  height: 23px;
  background: #1979ca;
}
.back-ribbon {
  height: 92px;
  padding: 42px 8px;
  font-size: 11px;
  background: #f5f6f7;
  border-bottom: 1px solid #ddd;
}
.back-nav {
  height: 38px;
  padding: 9px 11px;
}
.back-bar {
  height: 29px;
  background: #f4f4f4;
  border-bottom: 1px solid #ddd;
}
.back-main {
  flex: 1;
  display: flex;
  flex-direction: column;
  justify-content: space-between;
}
.back-row {
  width: 155px;
  height: 21px;
  margin-top: 157px;
  border: 1px solid #ddd;
  background: #f7f7f7;
}
.back-count {
  padding: 0 0 3px 13px;
}
.back-status {
  padding: 0 2px;
  line-height: 20px;
  background: #f0f0f0;
  border-top: 1px solid #ddd;
}

.ribbon-tabs {
  display: flex;
  height: 23px;
  font-size: 11px;
}
.ribbon-tabs button {
  width: 56px;
}
.ribbon-tabs .file {
  background: #1979ca;
  color: #fff;
}
.ribbon-tabs .on {
  width: 58px;
  background: #f5f6f7;
  border-right: 1px solid #ddd;
}
.ribbon-tabs .manage {
  width: 81px;
  margin-left: 3px;
  border: 1px solid #ddd;
  border-width: 0 1px;
}
.spacer {
  flex: 1;
}
.ribbon-tabs .mini {
  width: 22px;
  color: #777;
}
.ribbon-tabs .help {
  width: 14px;
  height: 14px;
  margin: 4px 4px 0 0;
  border-radius: 50%;
  background: #1a68b8;
  color: #fff;
  font-weight: 700;
}
.ribbon {
  display: grid;
  grid-template-columns: 195fr 191fr 145fr 134fr 120fr;
  height: 92px;
  background: #f5f6f7;
  border: 1px solid #dcdddf;
  border-width: 1px 0;
  font-size: 11px;
}
.group {
  min-width: 0;
  padding: 4px 0 0 6px;
  border-right: 1px solid #e0e1e3;
  display: flex;
  flex-direction: column;
  justify-content: space-between;
}
.group-name {
  text-align: center;
  line-height: 16px;
  color: #888;
}
.tools-row {
  display: flex;
  height: 66px;
}
.big {
  flex-direction: column;
  justify-content: flex-start;
  min-width: 42px;
  height: 66px;
  padding-top: 3px;
  line-height: 14px;
}
.big > svg {
  margin-bottom: 3px;
}
.big span {
  display: flex;
  align-items: center;
  gap: 3px;
  min-height: 12px;
  line-height: 12px;
}
.picked {
  background: #cbdff5;
  border: 1px solid #6ea3dc;
}
.big.picked {
  padding-top: 2px;
}
.dim {
  color: #8d8d8d;
}
.stack {
  display: flex;
  flex-direction: column;
  margin-left: 3px;
}
.stack button {
  height: 22px;
  gap: 3px;
  justify-content: flex-start;
  white-space: nowrap;
}
.organize {
  margin-left: -2px;
}
.line {
  margin: 0 3px;
  border-left: 1px solid #e0e1e3;
}
.tools-row.select .stack {
  margin-left: 1px;
}

.nav-row {
  display: flex;
  align-items: center;
  height: 38px;
  padding: 0 12px 0 10px;
}
.nav-row > button {
  margin-right: 9px;
}
.gray {
  color: #707070;
}
.nav-row > .up {
  margin: 0 6px 0 3px;
}
.path {
  flex: 1;
  display: flex;
  align-items: center;
  height: 22px;
  border: 1px solid #d9d9d9;
  padding-left: 3px;
}
.sep {
  margin: 0 8px 0 9px;
}
.drop {
  margin-left: auto;
  width: 23px;
  height: 20px;
  border-right: 1px solid #d9d9d9;
  color: #777;
}
.reload {
  width: 24px;
}
.search {
  display: flex;
  align-items: center;
  width: 202px;
  height: 22px;
  margin-left: 12px;
  padding: 0 8px;
  border: 1px solid #d9d9d9;
}
.search input {
  flex: 1;
  min-width: 0;
  border: 0;
  padding: 0;
  outline: 0;
  font: inherit;
  font-size: 11px;
}
.search input::placeholder {
  color: #707070;
}
.classic {
  display: flex;
  align-items: center;
  justify-content: flex-end;
  gap: 8px;
  height: 30px;
  padding: 0 7px;
  background: #f5f5f5;
  border-bottom: 1px solid #e4e4e4;
}
.classic button {
  width: 24px;
}
.classic .pane {
  width: 32px;
  height: 29px;
}
.classic .thin {
  width: 10px;
}
.classic i {
  height: 25px;
  border-left: 1px solid #444;
}
.explorer {
  flex: 1;
  min-height: 0;
  display: flex;
  overflow: hidden;
}
.tree {
  width: 157px;
  margin-right: 17px;
  padding-top: 9px;
}
.tree a {
  display: flex;
  align-items: center;
  gap: 4px;
  height: 21px;
  padding-left: 9px;
  border: 1px solid transparent;
}
.tree .sub {
  padding-left: 29px;
  gap: 5px;
}
.tree .top {
  margin-top: 21px;
}
.tree .here {
  background: #f7f7f7;
  border-color: #dedede;
}
.tree, .summary, .status {
  font-size: 11px;
}
.files {
  flex: 1;
  min-width: 0;
  background: linear-gradient(#e4e4e4, #e4e4e4) 577px 3px / 1px 20px no-repeat;
}
table {
  width: 573px;
  table-layout: fixed;
  border-collapse: collapse;
}
th {
  height: 31px;
  padding: 5px 6px 0;
  font-size: 11px;
  font-weight: 400;
  text-align: left;
  vertical-align: top;
  line-height: 16px;
  color: #5c5c5c;
  border: 0;
  background: linear-gradient(#e4e4e4, #e4e4e4) right 3px / 1px 20px no-repeat;
}
th.name {
  width: 257px;
  padding-left: 2px;
}
th.name svg {
  float: right;
  margin: -4px 122px 0 0;
}
th.date, th.type {
  width: 120px;
}
th.size {
  background: none;
}
td {
  height: 21px;
  padding: 0 6px;
  font-size: 11px;
  line-height: 18px;
  color: #66737c;
  background: #cce8f8;
  border: 1px solid #4f9fc8;
  border-width: 1px 0;
  white-space: nowrap;
}
td:first-child {
  padding-left: 3px;
  border-left-width: 1px;
  font-size: 12px;
  color: #222;
}
td:last-child {
  text-align: right;
  padding-right: 3px;
  border-right-width: 1px;
}
td svg {
  vertical-align: middle;
  margin-right: 4px;
}
.scrollbar {
  width: 17px;
  display: flex;
  flex-direction: column;
  align-items: center;
  padding: 6px 0 5px;
  background: #f3f3f3;
  color: #444;
}
.scrollbar span {
  width: 15px;
  height: 109px;
  margin: 4px 0 auto;
  background: #cdcdcd;
}
.summary {
  display: flex;
  align-items: center;
  gap: 21px;
  height: 23px;
  padding: 0 8px 0 14px;
  color: #2c3c58;
}
.summary button:first-of-type {
  margin-left: auto;
  margin-right: -16px;
  width: 22px;
  height: 23px;
  background: #cdeafa;
}
.status {
  display: flex;
  align-items: center;
  height: 23px;
  padding: 0 2px;
  background: #f0f0f0;
  border-top: 1px solid #ddd;
  color: #111;
}
.free {
  flex: 1;
}
.status .total {
  width: 89px;
  padding-left: 5px;
  border-left: 1px solid #ddd;
}
.status .zone {
  display: flex;
  align-items: center;
  gap: 4px;
  width: 142px;
  padding-left: 5px;
  border-left: 1px solid #ddd;
}
.grip {
  align-self: flex-end;
}
.pointer {
  position: absolute;
  left: 186px;
  top: 177px;
}

/* taskbar */
.taskbar {
  height: 40px;
  display: flex;
  border-top: 2px solid #c99345;
  background: linear-gradient(94deg, #b87a30 0, #b4742c 45%, #9c793a 45%, #9c793a 53%, #bfa572 53%, #b89e6c 100%);
}
.taskbar button {
  width: 58px;
}
.taskbar .start {
  width: 48px;
}
.taskbar .ie {
  width: 66px;
}
.taskbar .open {
  background: rgba(255, 255, 255, 0.18);
  border: 1px solid rgba(255, 235, 200, 0.5);
  margin-right: 4px;
}
.taskbar .stacked {
  width: 52px;
  margin-right: 6px;
  background: #d2b183;
  border: 1px solid #f5e8cf;
  box-shadow: 3px 0 0 #b98a4c, 4px 0 0 #f0dcb8;
}
.taskbar .store {
  width: 66px;
}
.tray {
  display: flex;
  align-items: center;
  gap: 9px;
  margin-left: auto;
  padding-right: 9px;
}
.clock {
  width: 68px;
  margin-left: 35px;
  font-size: 11px;
  line-height: 16px;
  text-align: center;
  white-space: nowrap;
  color: #fff;
}
```
FILE: script.js
```javascript
const rows = document.getElementById('rows');

const files = [
  ['Chrysanthemum', '7/14/2009 1:32 AM', '859'],
  ['Desert', '7/14/2009 1:32 AM', '827'],
  ['Hydrangeas', '7/14/2009 1:32 AM', '582'],
  ['img6', '11/2/2006 4:36 AM', '1,209'],
  ['img7', '11/2/2006 4:36 AM', '1,567'],
  ['img8', '11/2/2006 4:36 AM', '1,250'],
  ['img9', '11/2/2006 4:36 AM', '1,444'],
  ['img10', '11/2/2006 4:36 AM', '1,520'],
  ['img11', '11/2/2006 4:36 AM', '1,487'],
  ['img12', '11/2/2006 4:36 AM', '1,604'],
  ['img13', '11/2/2006 4:36 AM', '1,489'],
  ['img14', '11/2/2006 4:36 AM', '1,545'],
  ['img15', '11/2/2006 4:36 AM', '1,470'],
  ['img16', '11/2/2006 4:36 AM', '1,576'],
  ['img17', '11/2/2006 4:36 AM', '1,493']
];

files.forEach(([name, date, size]) => {
  const tr = document.createElement('tr');
  tr.innerHTML = `
    <td><svg width="16" height="14"><use href="#picture" /></svg>${name}</td>
    <td>${date}</td>
    <td>JPEG image</td>
    <td>${size} KB</td>
  `;
  rows.appendChild(tr);
});
```
